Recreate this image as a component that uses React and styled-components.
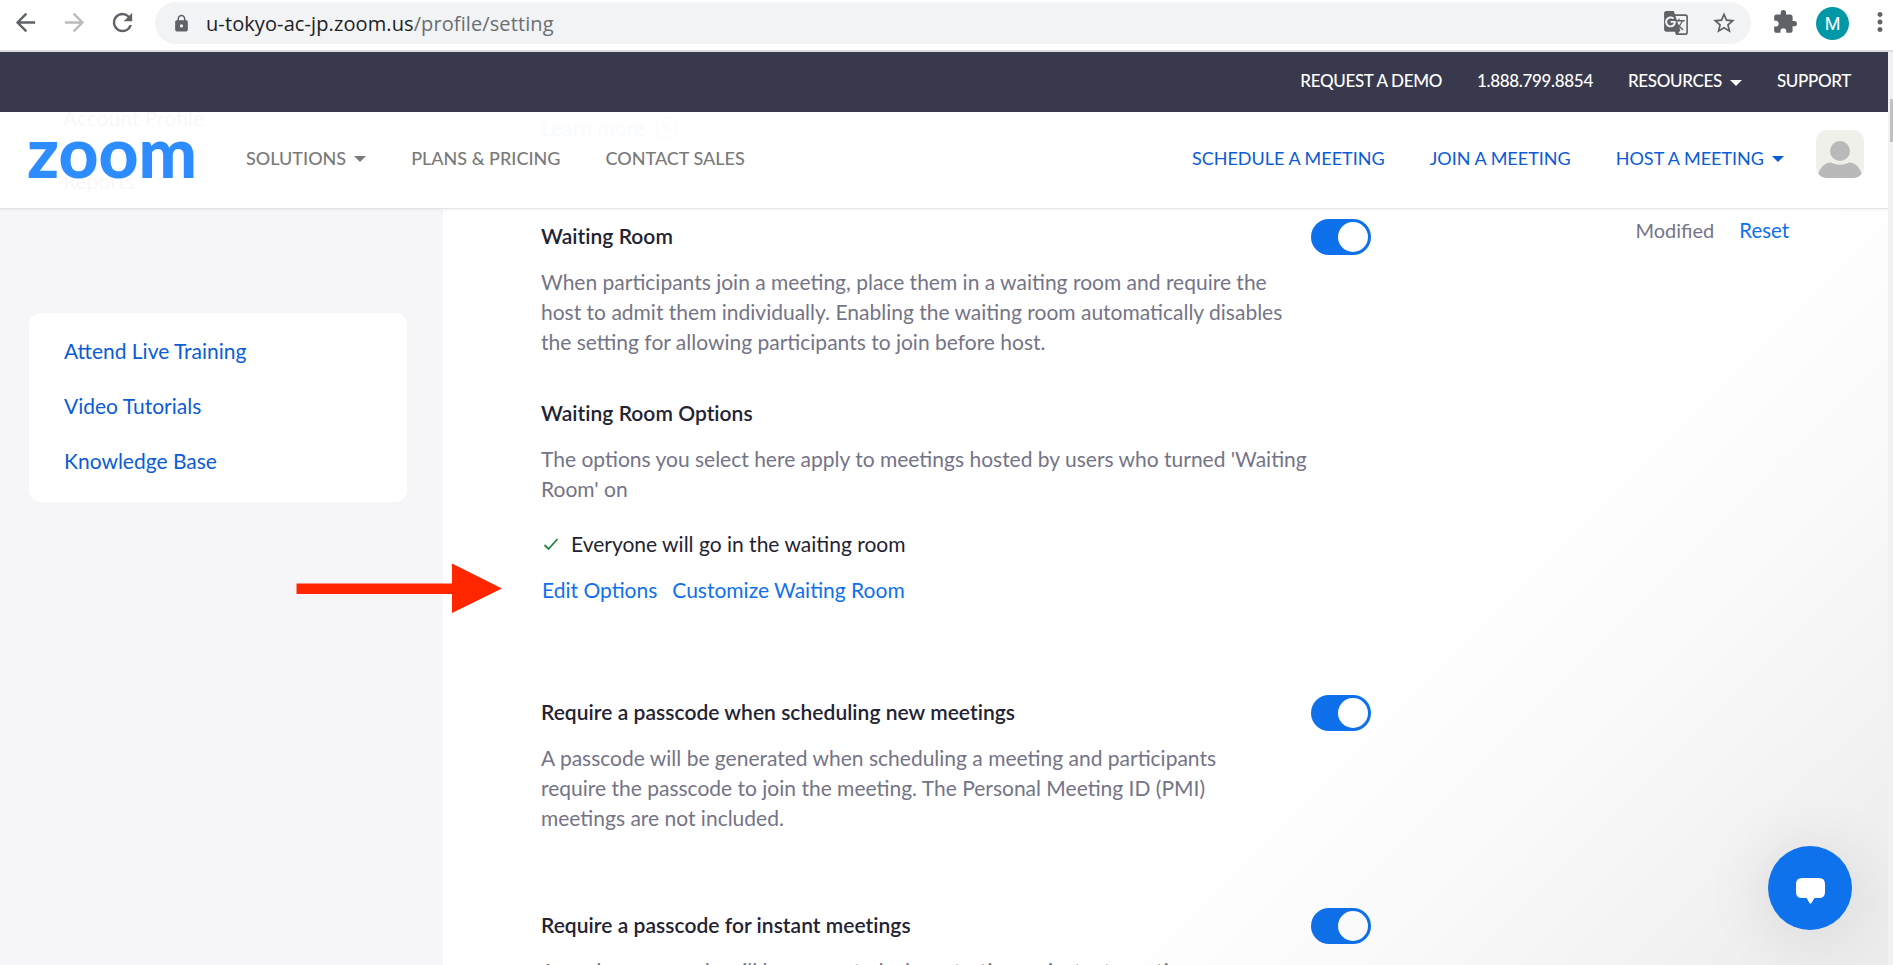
import React from 'react';
import styled, { createGlobalStyle } from 'styled-components';
import {
  MdArrowBack,
  MdArrowForward,
  MdRefresh,
  MdLock,
  MdGTranslate,
  MdStarBorder,
  MdExtension,
  MdMoreVert,
} from 'react-icons/md';

const GlobalStyle = createGlobalStyle`
  *, *::before, *::after { box-sizing: border-box; }
  html, body { margin: 0; overflow: hidden; background: #fff; }
  body { font-family: Lato, "Open Sans", sans-serif; font-size: 21px; line-height: 30px; }
  h2, p, ul { margin: 0; padding: 0; }
  a { text-decoration: none; color: inherit; }
`;

const Window = styled.div`
  position: relative;
  display: flex;
  flex-direction: column;
  height: 965px;
  overflow: hidden;
`;

/* ---------- browser toolbar ---------- */

const Toolbar = styled.header`
  display: flex;
  align-items: center;
  flex: none;
  height: 52px;
  padding: 0 0 6px 11px;
  border-bottom: 2px solid #dadce0;
  color: #5f6368;
  overflow: hidden;
  svg { display: block; flex: none; }
`;

const NavButtons = styled.div`
  display: flex;
  gap: 19.5px;
  margin-right: 18px;
`;

const ForwardIcon = styled(MdArrowForward)`
  color: #bbbcbe;
`;

const Omnibox = styled.div`
  display: flex;
  align-items: center;
  flex: none;
  width: 1596px;
  height: 42px;
  margin-top: 2px;
  padding: 0 14px 0 17px;
  border-radius: 21px;
  background: #f1f3f4;
`;

const Url = styled.span`
  flex: 1;
  margin-left: 15px;
  padding-top: 1px;
  font-family: "Open Sans", sans-serif;
  font-size: 20px;
  letter-spacing: 0.1px;
  font-variant-ligatures: none;
  color: #6a6e72;
`;

const UrlHost = styled.span`
  color: #202124;
`;

const BoxActions = styled.div`
  display: flex;
  gap: 22px;
`;

const BrowserActions = styled.div`
  display: flex;
  align-items: center;
  margin-left: 21px;
`;

const ProfileBadge = styled.div`
  display: flex;
  align-items: center;
  justify-content: center;
  flex: none;
  width: 33px;
  height: 33px;
  margin: 2px 16px 0 18px;
  border-radius: 50%;
  background: #0097a7;
  color: #fff;
  font: 18px Roboto, sans-serif;
`;

/* ---------- site chrome ---------- */

const Viewport = styled.div`
  display: flex;
  flex: 1;
  min-height: 0;
`;

const Site = styled.div`
  position: relative;
  flex: 1;
  display: flex;
  flex-direction: column;
  overflow: hidden;
`;

const TopBar = styled.nav`
  display: flex;
  align-items: center;
  justify-content: flex-end;
  gap: 35px;
  flex: none;
  height: 60px;
  padding: 0 37px 2px 0;
  background: #39394d;
  color: #fff;
  font-size: 17px;
  font-weight: 500;
  letter-spacing: -0.33px;
`;

const MenuLink = styled.a`
  display: flex;
  align-items: center;
  white-space: nowrap;
`;

const Caret = styled.span`
  margin: 3px 0 0 8px;
  border: 6px solid transparent;
  border-top-color: currentColor;
  border-bottom: 0;
`;

const MainNav = styled.nav`
  position: relative;
  z-index: 1;
  display: flex;
  align-items: center;
  flex: none;
  height: 97px;
  padding: 0 24px 5px 29px;
  border-bottom: 1px solid #e4e4e6;
  box-shadow: 0 1px 3px rgba(0, 0, 0, 0.05);
  background: #fff;
  font-size: 18px;
  overflow: hidden;
`;

const Logo = styled.svg`
  position: relative;
  display: block;
  flex: none;
  margin: 3px 52px 0 0;
  overflow: visible;
  text { font: 900 70px Lato, sans-serif; fill: #2d8cff; }
`;

const MenuGroup = styled.div`
  position: relative;
  display: flex;
  gap: 45px;
  font-weight: ${(p) => (p.$accent ? 400 : 500)};
  color: ${(p) => (p.$accent ? '#0b5cd5' : '#7a7a7a')};
  margin-left: ${(p) => (p.$accent ? 'auto' : '0')};
`;

const Faded = styled.span`
  position: absolute;
  left: ${(p) => p.$x}px;
  top: ${(p) => p.$y}px;
  display: flex;
  align-items: center;
  gap: 12px;
  font-size: 21px;
  color: ${(p) => (p.$blue ? '#f7fbff' : '#f8f8f9')};
`;

const FadedBadge = styled.span`
  width: 20px;
  height: 20px;
  border: 1.5px solid currentColor;
  border-radius: 5px;
  font: italic 16px/16px "Liberation Serif", serif;
  text-align: center;
`;

const Avatar = styled.svg`
  display: block;
  flex: none;
  margin: 0 0 7px 32px;
  border-radius: 11px;
  background: #f0f0eb;
`;

/* ---------- page body ---------- */

const Body = styled.div`
  display: flex;
  flex: 1;
  min-height: 0;
`;

const Sidebar = styled.aside`
  flex: none;
  width: 443px;
  padding: 104px 36px 0 29px;
  background: #f6f6f9;
`;

const HelpCard = styled.ul`
  display: flex;
  flex-direction: column;
  gap: 25px;
  height: 189px;
  padding: 23px 35px;
  border-radius: 12px;
  background: #fff;
  color: #0b5cd5;
  list-style: none;
`;

const Settings = styled.main`
  flex: 1;
  padding: 10px 99px 0 98px;
`;

const Setting = styled.section`
  display: flex;
  align-items: flex-start;
  margin-bottom: ${(p) => p.$gap}px;
`;

const SettingText = styled.div`
  width: 770px;
  padding-top: 2px;
`;

const Title = styled.h2`
  margin-top: ${(p) => p.$top || 0}px;
  font-size: 21px;
  font-weight: 600;
  letter-spacing: 0.04px;
  font-variant-ligatures: common-ligatures;
  color: #232333;
`;

const Description = styled.p`
  max-width: ${(p) => p.$width}px;
  margin-top: 16px;
  color: #747487;
`;

const Choice = styled.p`
  display: flex;
  align-items: center;
  gap: 12px;
  margin-top: 25px;
  padding-left: 2px;
  color: #232333;
`;

const ActionLinks = styled.p`
  display: flex;
  gap: 15px;
  margin-top: 16px;
  padding-left: 1px;
  color: #0e71eb;
`;

const Toggle = styled.span`
  display: flex;
  justify-content: flex-end;
  flex: none;
  width: 60px;
  height: 36px;
  padding: 3px;
  border-radius: 18px;
  background: #0e71eb;
  &::after {
    content: "";
    width: 30px;
    height: 30px;
    border-radius: 50%;
    background: #fff;
  }
`;

const Status = styled.div`
  display: flex;
  gap: 25px;
  margin: -4px 0 0 auto;
  font-size: 20px;
  color: #747487;
`;

const ResetLink = styled.a`
  font-size: 20.4px;
  color: #0e71eb;
`;

const ScrollTrack = styled.div`
  flex: none;
  width: 5px;
  padding: 47px 0 0 2px;
  background: #f1f1f1;
`;

const ScrollThumb = styled.div`
  height: 43px;
  background: #c1c1c1;
`;

/* ---------- layers over the page ---------- */

const Shade = styled.div`
  position: absolute;
  z-index: 2;
  inset: 60px 0 0 0;
  pointer-events: none;
  background: linear-gradient(135deg, transparent 70%, rgba(0, 0, 0, 0.025) 82%, rgba(0, 0, 0, 0.08) 100%);
`;

const ChatButton = styled.button`
  position: absolute;
  z-index: 3;
  right: 36px;
  bottom: 35px;
  display: flex;
  align-items: center;
  justify-content: center;
  width: 84px;
  height: 84px;
  padding: 5px 0 0 1px;
  border: 0;
  border-radius: 50%;
  background: #0e72ed;
  box-shadow: 0 4px 60px 10px rgba(0, 0, 0, 0.08);
`;

const Pointer = styled.svg`
  position: absolute;
  z-index: 3;
  left: 296px;
  top: 511px;
`;

const helpLinks = ['Attend Live Training', 'Video Tutorials', 'Knowledge Base'];

export default function App() {
  return (
    <Window>
      <GlobalStyle />
      <Toolbar>
        <NavButtons>
          <MdArrowBack size={29} />
          <ForwardIcon size={29} />
          <MdRefresh size={29} />
        </NavButtons>
        <Omnibox>
          <MdLock size={19} />
          <Url>
            <UrlHost>u-tokyo-ac-jp.zoom.us</UrlHost>/profile/setting
          </Url>
          <BoxActions>
            <MdGTranslate size={26} />
            <MdStarBorder size={26} />
          </BoxActions>
        </Omnibox>
        <BrowserActions>
          <MdExtension size={26} />
          <ProfileBadge>M</ProfileBadge>
          <MdMoreVert size={30} />
        </BrowserActions>
      </Toolbar>

      <Viewport>
        <Site>
          <TopBar>
            <MenuLink>REQUEST A DEMO</MenuLink>
            <MenuLink>1.888.799.8854</MenuLink>
            <MenuLink>RESOURCES<Caret /></MenuLink>
            <MenuLink>SUPPORT</MenuLink>
          </TopBar>

          <MainNav>
            <Faded $x={63} $y={-9}>Account Profile</Faded>
            <Faded $x={63} $y={54}>Reports</Faded>
            <Faded $x={541} $y={1} $blue>Learn more<FadedBadge>v.</FadedBadge></Faded>
            <Logo width="165" height="37" viewBox="0 0 165 37">
              <text x="-2" y="36.500" textLength="170" lengthAdjust="spacingAndGlyphs">zoom</text>
            </Logo>
            <MenuGroup>
              <MenuLink>SOLUTIONS<Caret /></MenuLink>
              <MenuLink>PLANS &amp; PRICING</MenuLink>
              <MenuLink>CONTACT SALES</MenuLink>
            </MenuGroup>
            <MenuGroup $accent>
              <MenuLink>SCHEDULE A MEETING</MenuLink>
              <MenuLink>JOIN A MEETING</MenuLink>
              <MenuLink>HOST A MEETING<Caret /></MenuLink>
            </MenuGroup>
            <Avatar width="48" height="48" viewBox="0 0 48 48">
              <circle cx="24" cy="21" r="10" fill="#b9b9b9" />
              <path d="M2 44C5 36 10 32 15 32.500C21 35.500 27 35.500 33 32.500C38 32 43 36 46 44Q44 48 38 48H10Q4 48 2 44Z" fill="#b9b9b9" />
            </Avatar>
          </MainNav>

          <Body>
            <Sidebar>
              <HelpCard>
                {helpLinks.map((label) => (
                  <li key={label}><a>{label}</a></li>
                ))}
              </HelpCard>
            </Sidebar>

            <Settings>
              <Setting $gap={90}>
                <SettingText>
                  <Title>Waiting Room</Title>
                  <Description $width={755}>
                    When participants join a meeting, place them in a waiting room and require the host to admit
                    them individually. Enabling the waiting room automatically disables the setting for allowing
                    participants to join before host.
                  </Description>
                  <Title $top={41}>Waiting Room Options</Title>
                  <Description $width={770}>
                    The options you select here apply to meetings hosted by users who turned 'Waiting Room' on
                  </Description>
                  <Choice>
                    <svg width="16" height="14" viewBox="0 0 16 14">
                      <path d="M1.500 8L5.500 12L14.500 2" fill="none" stroke="#268543" strokeWidth="1.800" />
                    </svg>
                    Everyone will go in the waiting room
                  </Choice>
                  <ActionLinks>
                    <a>Edit Options</a>
                    <a>Customize Waiting Room</a>
                  </ActionLinks>
                </SettingText>
                <Toggle />
                <Status>
                  Modified
                  <ResetLink>Reset</ResetLink>
                </Status>
              </Setting>

              <Setting $gap={75}>
                <SettingText>
                  <Title>Require a passcode when scheduling new meetings</Title>
                  <Description $width={700}>
                    A passcode will be generated when scheduling a meeting and participants require the passcode
                    to join the meeting. The Personal Meeting ID (PMI) meetings are not included.
                  </Description>
                </SettingText>
                <Toggle />
              </Setting>

              <Setting $gap={0}>
                <SettingText>
                  <Title>Require a passcode for instant meetings</Title>
                  <Description $width={700}>
                    A random passcode will be generated when starting an instant meeting
                  </Description>
                </SettingText>
                <Toggle />
              </Setting>
            </Settings>
          </Body>

          <Shade />
          <Pointer width="207" height="51" viewBox="0 0 207 51">
            <path d="M0.500 20.500H156V0.500L206 25.500L156 50V31H0.500Z" fill="#ff2600" />
          </Pointer>
          <ChatButton>
            <svg width="29" height="26" viewBox="0 0 29 26">
              <path d="M6 0H23Q29 0 29 6V14Q29 20 23 20H18.500L15.500 25Q14.500 26.500 13.500 25L10.500 20H6Q0 20 0 14V6Q0 0 6 0Z" fill="#fff" />
            </svg>
          </ChatButton>
        </Site>
        <ScrollTrack>
          <ScrollThumb />
        </ScrollTrack>
      </Viewport>
    </Window>
  );
}
